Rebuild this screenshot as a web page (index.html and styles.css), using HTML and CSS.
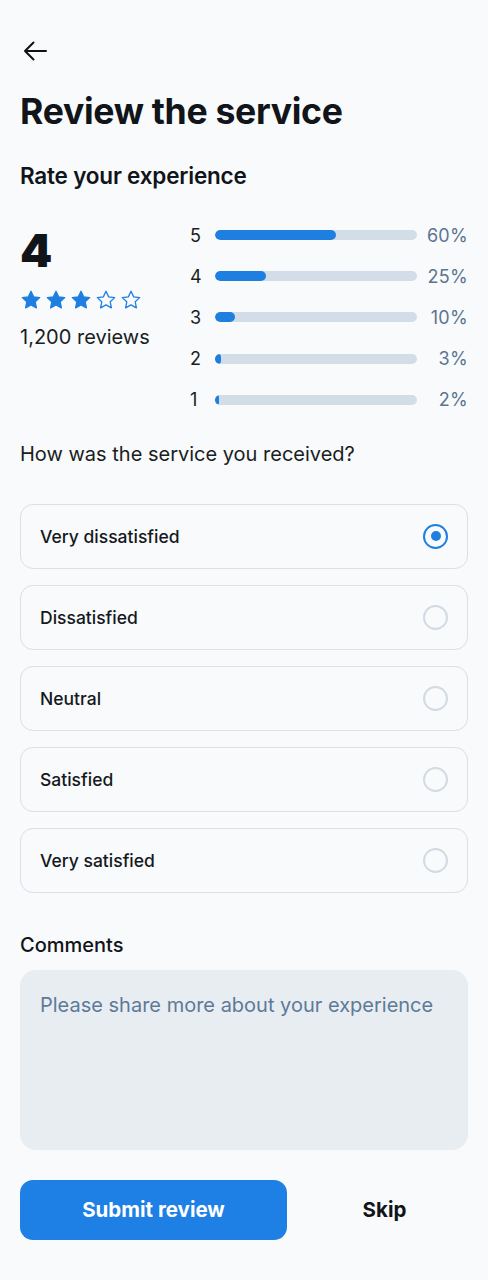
FILE: index.html
```html
<!DOCTYPE html>
<html>
<head>
<meta charset="utf-8">
<link rel="stylesheet" href="styles.css">
</head>
<body>
<div class="page">
  <button class="back" aria-label="Back">
    <svg width="26" height="22" viewBox="0 0 26 22"><path d="M24 11H3M11.5 2.5L3 11l8.5 8.5" fill="none" stroke="#111" stroke-width="2" stroke-linecap="round" stroke-linejoin="round"/></svg>
  </button>
  <h1 class="title">Review the service</h1>
  <h2 class="subtitle">Rate your experience</h2>

  <div class="rating">
    <div class="summary">
      <div class="score">4</div>
      <div class="stars">
        <svg viewBox="0 0 24 24" class="star"><path d="M12 2.5l2.9 6.1 6.6.8-4.9 4.6 1.3 6.6L12 17.3l-5.9 3.3 1.3-6.6-4.9-4.6 6.6-.8z" fill="#1e7fe0" stroke="#1e7fe0" stroke-width="1.4" stroke-linejoin="round"/></svg>
        <svg viewBox="0 0 24 24" class="star"><path d="M12 2.5l2.9 6.1 6.6.8-4.9 4.6 1.3 6.6L12 17.3l-5.9 3.3 1.3-6.6-4.9-4.6 6.6-.8z" fill="#1e7fe0" stroke="#1e7fe0" stroke-width="1.4" stroke-linejoin="round"/></svg>
        <svg viewBox="0 0 24 24" class="star"><path d="M12 2.5l2.9 6.1 6.6.8-4.9 4.6 1.3 6.6L12 17.3l-5.9 3.3 1.3-6.6-4.9-4.6 6.6-.8z" fill="#1e7fe0" stroke="#1e7fe0" stroke-width="1.4" stroke-linejoin="round"/></svg>
        <svg viewBox="0 0 24 24" class="star"><path d="M12 2.5l2.9 6.1 6.6.8-4.9 4.6 1.3 6.6L12 17.3l-5.9 3.3 1.3-6.6-4.9-4.6 6.6-.8z" fill="none" stroke="#1e7fe0" stroke-width="1.4" stroke-linejoin="round"/></svg>
        <svg viewBox="0 0 24 24" class="star"><path d="M12 2.5l2.9 6.1 6.6.8-4.9 4.6 1.3 6.6L12 17.3l-5.9 3.3 1.3-6.6-4.9-4.6 6.6-.8z" fill="none" stroke="#1e7fe0" stroke-width="1.4" stroke-linejoin="round"/></svg>
      </div>
      <div class="count">1,200 reviews</div>
    </div>
    <div class="bars">
      <div class="bar-row"><span class="bar-label">5</span><div class="track"><div class="fill" style="width:60%"></div></div><span class="pct">60%</span></div>
      <div class="bar-row"><span class="bar-label">4</span><div class="track"><div class="fill" style="width:25%"></div></div><span class="pct">25%</span></div>
      <div class="bar-row"><span class="bar-label">3</span><div class="track"><div class="fill" style="width:10%"></div></div><span class="pct">10%</span></div>
      <div class="bar-row"><span class="bar-label">2</span><div class="track"><div class="fill" style="width:3%"></div></div><span class="pct">3%</span></div>
      <div class="bar-row"><span class="bar-label">1</span><div class="track"><div class="fill" style="width:2%"></div></div><span class="pct">2%</span></div>
    </div>
  </div>

  <p class="question">How was the service you received?</p>

  <div class="options">
    <label class="option"><span>Very dissatisfied</span><span class="radio checked"></span></label>
    <label class="option"><span>Dissatisfied</span><span class="radio"></span></label>
    <label class="option"><span>Neutral</span><span class="radio"></span></label>
    <label class="option"><span>Satisfied</span><span class="radio"></span></label>
    <label class="option"><span>Very satisfied</span><span class="radio"></span></label>
  </div>

  <div class="comments-label">Comments</div>
  <textarea class="comments" placeholder="Please share more about your experience"></textarea>

  <div class="actions">
    <button class="submit">Submit review</button>
    <button class="skip">Skip</button>
  </div>
</div>
</body>
</html>
```

FILE: styles.css
```css
* { box-sizing: border-box; }
html, body { margin: 0; padding: 0; background: #f8fafc; }
body { font-family: Inter, "Noto Sans", sans-serif; color: #111418; }
.page { width: 488px; padding: 40px 20px 0; display: flex; flex-direction: column; }
.back { background: none; border: 0; padding: 0; margin: 0 0 0 2px; width: 26px; height: 22px; display: flex; cursor: pointer; }
.title { margin: 28px 0 0; font-size: 35.6px; line-height: 44px; font-weight: 700; letter-spacing: -0.3px; }
.subtitle { margin: 27px 0 0; font-size: 22.5px; line-height: 30px; font-weight: 600; letter-spacing: -0.2px; }
.rating { display: flex; margin-top: 32px; }
.summary { width: 170px; display: flex; flex-direction: column; }
.score { font-size: 46px; line-height: 50px; font-weight: 900; margin-top: 2px; }
.stars { display: flex; gap: 3px; margin-top: 14px; }
.star { width: 22px; height: 22px; }
.count { font-size: 20px; line-height: 26px; margin-top: 13px; color: #1a1d21; }
.bars { flex: 1; display: flex; flex-direction: column; gap: 17px; }
.bar-row { display: flex; align-items: center; height: 24.2px; }
.bar-label { width: 25px; font-size: 18px; color: #1a1d21; }
.track { width: 202px; height: 10px; background: #d3dde8; border-radius: 5px; overflow: hidden; }
.fill { height: 100%; background: #1e7fe0; border-radius: 5px; }
.pct { flex: 1; text-align: right; font-size: 18px; color: #5b7590; letter-spacing: 0.3px; }
.question { margin: 28px 0 0; font-size: 20px; line-height: 28px; color: #1a1d21; }
.options { display: flex; flex-direction: column; gap: 16px; margin-top: 36px; }
.option { height: 65px; border: 1.5px solid #d8e0e8; border-radius: 13px; display: flex; align-items: center; justify-content: space-between; padding: 0 19px 0 19px; font-size: 17.5px; font-weight: 500; color: #15181c; }
.radio { width: 25px; height: 25px; border: 2px solid #d2dae3; border-radius: 50%; display: flex; align-items: center; justify-content: center; }
.radio.checked { border: 2.5px solid #1e7fe0; }
.radio.checked::after { content: ""; width: 10px; height: 10px; border-radius: 50%; background: #1e7fe0; }
.comments-label { margin-top: 39px; font-size: 20px; line-height: 26px; font-weight: 500; color: #111418; }
.comments { margin-top: 12px; width: 100%; height: 180px; border: 0; border-radius: 16px; background: #e8edf2; padding: 20px 20px; font-family: inherit; font-size: 20px; line-height: 30px; resize: none; color: #1a1d21; }
.comments::placeholder { color: #5d7a99; }
.actions { display: flex; align-items: center; margin-top: 30px; }
.submit { width: 267px; height: 60px; border: 0; border-radius: 13px; background: #1e7fe5; color: #fff; font-family: inherit; font-size: 20.5px; font-weight: 700; }
.skip { flex: 1; height: 60px; border: 0; background: none; padding: 0 0 0 14px; font-family: inherit; font-size: 20.5px; font-weight: 700; color: #111418; }
```
